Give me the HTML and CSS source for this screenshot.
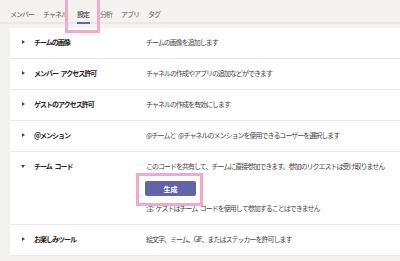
FILE: index.html
```html
<!DOCTYPE html>
<html>
<head>
    <meta charset="UTF-8">
    <title>設定</title>
    <link rel="stylesheet" href="styles.css">
</head>
<body>
    <div class="tabs">
        <span class="tab">メンバー</span>
        <span class="tab">チャネル</span>
        <span class="tab current">設定</span>
        <span class="tab">分析</span>
        <span class="tab">アプリ</span>
        <span class="tab">タグ</span>
        <div class="mark mark-tab"></div>
    </div>
    <div class="panel">
        <div class="row">
            <span class="arrow"></span>
            <span class="title">チームの画像</span>
            <span class="desc">チームの画像を追加します</span>
        </div>
        <div class="row">
            <span class="arrow"></span>
            <span class="title">メンバー アクセス許可</span>
            <span class="desc">チャネルの作成やアプリの追加などができます</span>
        </div>
        <div class="row">
            <span class="arrow"></span>
            <span class="title">ゲストのアクセス許可</span>
            <span class="desc">チャネルの作成を有効にします</span>
        </div>
        <div class="row">
            <span class="arrow"></span>
            <span class="title">@メンション</span>
            <span class="desc">@チームと @チャネルのメンションを使用できるユーザーを選択します</span>
        </div>
        <div class="row open">
            <span class="arrow"></span>
            <span class="title">チーム コード</span>
            <div class="desc">
                <div>このコードを共有して、チームに直接参加できます。参加のリクエストは受け取りません</div>
                <div class="code">
                    <button class="btn">生成</button>
                    <div class="mark mark-btn"></div>
                </div>
                <div>注: ゲストはチーム コードを使用して参加することはできません</div>
            </div>
        </div>
        <div class="row">
            <span class="arrow"></span>
            <span class="title">お楽しみツール</span>
            <span class="desc">絵文字、ミーム、GIF、またはステッカーを許可します</span>
        </div>
    </div>
</body>
</html>
```

FILE: styles.css
```css
body, div, span, button {
    margin: 0;
    padding: 0;
}
body {
    background-color: #f3f2f1;
    font-family: "Noto Sans CJK JP", "Noto Sans", sans-serif;
    font-size: 7px;
    letter-spacing: -1px;
    word-spacing: 2px;
    color: #252423;
}
.tabs {
    position: relative;
    display: flex;
    height: 22px;
    padding-left: 10px;
    border-bottom: 2px solid #e8e7e6;
}
.tab {
    position: relative;
    line-height: 29px;
    height: 22px;
    margin-right: 9px;
    color: #605e5c;
}
.tab.current {
    color: #252423;
    margin-left: 1px;
    margin-right: 11px;
}
.tab.current:after {
    content: "";
    position: absolute;
    left: 0;
    right: -1px;
    bottom: -2px;
    height: 2px;
    background-color: #6264a7;
}
.mark {
    position: absolute;
    border: 3px solid #f3a9c9;
}
.mark-tab {
    left: 65px;
    top: -4px;
    width: 29px;
    height: 31px;
}
.panel {
    margin: 4px 0 0 10px;
    background-color: #ffffff;
}
.row {
    display: grid;
    grid-template-columns: 24px 112px 1fr;
    padding: 10px 0 12px 0;
    line-height: 8px;
    border-bottom: 1px solid #edebe9;
}
.arrow {
    width: 0;
    height: 0;
    margin: 2px 0 0 12px;
    border-style: solid;
    border-width: 2px 0 2px 3px;
    border-color: transparent transparent transparent #484644;
}
.row.open .arrow {
    margin: 3px 0 0 11px;
    border-width: 3px 2px 0 2px;
    border-color: #484644 transparent transparent transparent;
}
.title {
    font-weight: bold;
    color: #252423;
}
.desc {
    color: #484644;
}
.row.open {
    padding-bottom: 12px;
}
.code {
    position: relative;
    height: 23px;
    padding-top: 11px;
}
.btn {
    display: block;
    width: 51px;
    height: 15px;
    margin-left: -1px;
    border: none;
    border-radius: 2px;
    background-color: #6264a7;
    color: #ffffff;
    font-family: inherit;
    font-size: 7px;
    font-weight: bold;
    letter-spacing: 0;
}
.mark-btn {
    left: -10px;
    top: 3px;
    width: 61px;
    height: 27px;
}
```
